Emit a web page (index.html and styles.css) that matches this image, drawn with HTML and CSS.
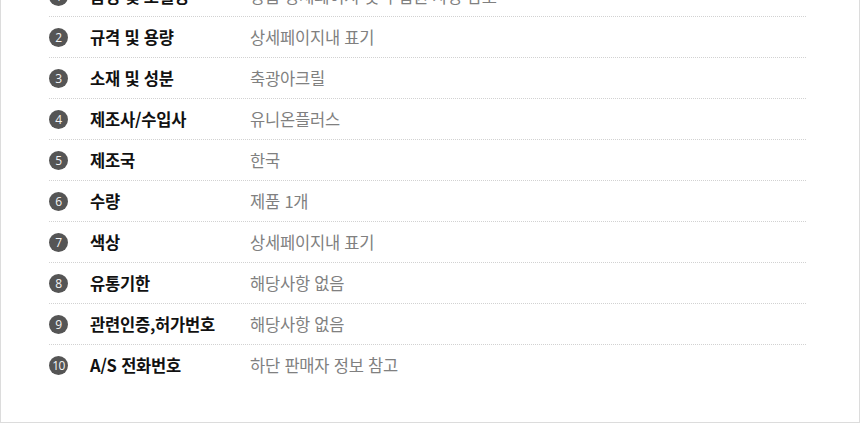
FILE: index.html
```html
<!DOCTYPE html>
<html lang="ko">
<head>
    <meta charset="UTF-8">
    <title>상품정보 제공고시</title>
    <link rel="stylesheet" href="styles.css">
</head>
<body>
    <div class="info-box">
        <ul class="info-list">
            <li class="info-row"><span class="num">1</span><span class="label">품명 및 모델명</span><span class="value">상품 상세페이지 및 수입원 사항 참조</span></li>
            <li class="info-row"><span class="num">2</span><span class="label">규격 및 용량</span><span class="value">상세페이지내 표기</span></li>
            <li class="info-row"><span class="num">3</span><span class="label">소재 및 성분</span><span class="value">축광아크릴</span></li>
            <li class="info-row"><span class="num">4</span><span class="label">제조사/수입사</span><span class="value">유니온플러스</span></li>
            <li class="info-row"><span class="num">5</span><span class="label">제조국</span><span class="value">한국</span></li>
            <li class="info-row"><span class="num">6</span><span class="label">수량</span><span class="value">제품 1개</span></li>
            <li class="info-row"><span class="num">7</span><span class="label">색상</span><span class="value">상세페이지내 표기</span></li>
            <li class="info-row"><span class="num">8</span><span class="label">유통기한</span><span class="value">해당사항 없음</span></li>
            <li class="info-row"><span class="num">9</span><span class="label">관련인증,허가번호</span><span class="value">해당사항 없음</span></li>
            <li class="info-row"><span class="num">10</span><span class="label">A/S 전화번호</span><span class="value">하단 판매자 정보 참고</span></li>
        </ul>
    </div>
</body>
</html>
```

FILE: styles.css
```css
body {
    margin: 0;
    background: #fff;
    font-family: "Noto Sans CJK KR", "Noto Sans", sans-serif;
    overflow: hidden;
}
.info-box {
    width: 860px;
    box-sizing: border-box;
    margin-top: -24px; /* page is scrolled, first row cut off */
    padding-bottom: 37px;
    border: 1px solid #dcdcdc;
    border-top: none;
}
.info-list {
    list-style: none;
    margin: 0 0 0 48px;
    padding: 0;
    width: 757px;
}
.info-row {
    display: flex;
    align-items: center;
    height: 40px;
    border-bottom: 1px dotted #d2d2d2;
}
.info-row:last-child {
    border-bottom: none;
}
.num {
    width: 19px;
    height: 19px;
    border-radius: 50%;
    background: #555;
    color: #f4f4f4;
    font-family: "Open Sans", sans-serif;
    font-size: 12px;
    line-height: 19px;
    text-align: center;
    letter-spacing: -0.5px;
}
.label {
    width: 160px;
    margin-left: 22px;
    font-size: 16.5px;
    font-weight: bold;
    color: #111;
    letter-spacing: -0.2px;
}
.value {
    font-size: 16.5px;
    color: #808080;
    letter-spacing: -0.2px;
}
```
